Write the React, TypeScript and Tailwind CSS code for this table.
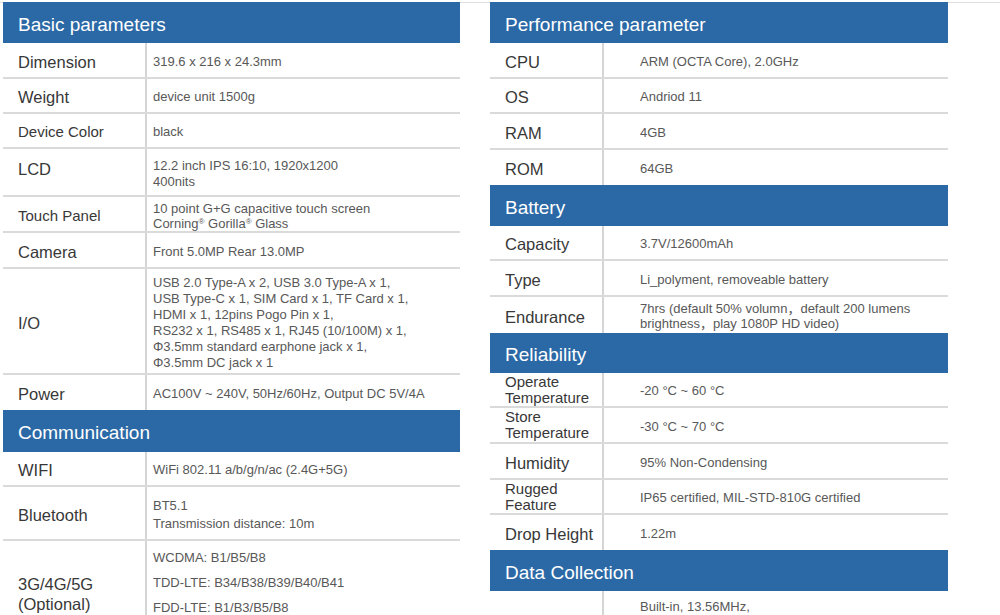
import React from "react";

type Side = "l" | "r";

function Header({ title, h }: { title: string; h: string }) {
  return (
    <div className={`${h} bg-[#2b69a6] text-white text-[19px] flex items-center pl-[15px] pt-[5px]`}>
      {title}
    </div>
  );
}

function Row({
  label,
  children,
  h,
  side,
  lsize = "text-[16.5px] leading-[20px]",
  border = true,
  valueClass = "items-center pt-[3px]",
  labelClass = "pt-[3px]",
}: {
  label: React.ReactNode;
  children?: React.ReactNode;
  h: string;
  side: Side;
  lsize?: string;
  border?: boolean;
  valueClass?: string;
  labelClass?: string;
}) {
  return (
    <div className={`flex ${h} ${border ? "border-b-2 border-[#dadada]" : ""}`}>
      <div
        className={`flex items-center pl-[15px] text-[#383838] shrink-0 ${side === "l" ? "w-[142px]" : "w-[112px]"} ${lsize} ${labelClass}`}
      >
        <div>{label}</div>
      </div>
      <div
        className={`flex-1 flex border-l-2 border-[#d5d5d5] text-[13px] text-[#585858] ${side === "l" ? "pl-[6px]" : "pl-[36px]"} ${valueClass}`}
      >
        <div>{children}</div>
      </div>
    </div>
  );
}

const small = "text-[15px] leading-[16px]";

export default function App() {
  return (
    <div className="w-[1000px] h-[615px] overflow-hidden bg-white font-['Liberation_Sans','Noto_Sans_CJK_SC',sans-serif]">
      <div className="h-[2px]" />
      <div className="h-px bg-[#dedede]" />
      <div className="flex pl-[3px] gap-[30px] -mt-px">
        {/* Left column */}
        <div className="w-[457px] flex flex-col">
          <Header title="Basic parameters" h="h-[41px]" />
          <Row side="l" h="h-[36px]" label="Dimension">319.6 x 216 x 24.3mm</Row>
          <Row side="l" h="h-[35px]" label="Weight">device unit 1500g</Row>
          <Row side="l" h="h-[35px]" label="Device Color" lsize={small}>black</Row>
          <Row side="l" h="h-[48px]" label="LCD" labelClass="pb-[6px]">
            <div className="leading-[16px]">
              <div>12.2 inch IPS 16:10, 1920x1200</div>
              <div>400nits</div>
            </div>
          </Row>
          <Row side="l" h="h-[36px]" label="Touch Panel" lsize={small}>
            <div className="leading-[15px]">
              <div>10 point G+G capacitive touch screen</div>
              <div>
                Corning<sup className="text-[8px]">®</sup> Gorilla<sup className="text-[8px]">®</sup> Glass
              </div>
            </div>
          </Row>
          <Row side="l" h="h-[36px]" label="Camera">Front 5.0MP Rear 13.0MP</Row>
          <Row side="l" h="h-[106px]" label="I/O">
            <div className="leading-[16px]">
              <div>USB 2.0 Type-A x 2, USB 3.0 Type-A x 1,</div>
              <div>USB Type-C x 1, SIM Card x 1, TF Card x 1,</div>
              <div>HDMI x 1, 12pins Pogo Pin x 1,</div>
              <div>RS232 x 1, RS485 x 1, RJ45 (10/100M) x 1,</div>
              <div>Φ3.5mm standard earphone jack x 1,</div>
              <div>Φ3.5mm DC jack x 1</div>
            </div>
          </Row>
          <Row side="l" h="h-[35px]" label="Power" border={false}>
            AC100V ~ 240V, 50Hz/60Hz, Output DC 5V/4A
          </Row>
          <Header title="Communication" h="h-[42px]" />
          <Row side="l" h="h-[35px]" label="WIFI">WiFi 802.11 a/b/g/n/ac (2.4G+5G)</Row>
          <Row side="l" h="h-[54px]" label="Bluetooth">
            <div className="leading-[18px]">
              <div>BT5.1</div>
              <div>Transmission distance: 10m</div>
            </div>
          </Row>
          <Row
            side="l"
            h="h-[104px]"
            label={
              <div>
                <div>3G/4G/5G</div>
                <div>(Optional)</div>
              </div>
            }
            valueClass="items-start pt-[4px]"
          >
            <div className="leading-[25px]">
              <div>WCDMA: B1/B5/B8</div>
              <div>TDD-LTE: B34/B38/B39/B40/B41</div>
              <div>FDD-LTE: B1/B3/B5/B8</div>
            </div>
          </Row>
        </div>

        {/* Right column */}
        <div className="w-[458px] flex flex-col">
          <Header title="Performance parameter" h="h-[41px]" />
          <Row side="r" h="h-[36px]" label="CPU">ARM (OCTA Core), 2.0GHz</Row>
          <Row side="r" h="h-[35px]" label="OS">Andriod 11</Row>
          <Row side="r" h="h-[36px]" label="RAM">4GB</Row>
          <Row side="r" h="h-[35px]" label="ROM" border={false}>64GB</Row>
          <Header title="Battery" h="h-[41px]" />
          <Row side="r" h="h-[35px]" label="Capacity">3.7V/12600mAh</Row>
          <Row side="r" h="h-[36px]" label="Type">Li_polyment, removeable battery</Row>
          <Row side="r" h="h-[36px]" label="Endurance" border={false} valueClass="items-center pt-[1px]">
            <div className="leading-[15px]">
              <div>7hrs (default 50% volumn，default 200 lumens</div>
              <div>brightness，play 1080P HD video)</div>
            </div>
          </Row>
          <Header title="Reliability" h="h-[40px]" />
          <Row
            side="r"
            h="h-[35px]"
            lsize={small}
            labelClass="pt-0"
            label={
              <div>
                <div>Operate</div>
                <div>Temperature</div>
              </div>
            }
          >
            -20 °C ~ 60 °C
          </Row>
          <Row
            side="r"
            h="h-[36px]"
            lsize={small}
            labelClass="pt-0"
            label={
              <div>
                <div>Store</div>
                <div>Temperature</div>
              </div>
            }
          >
            -30 °C ~ 70 °C
          </Row>
          <Row side="r" h="h-[36px]" label="Humidity">95% Non-Condensing</Row>
          <Row
            side="r"
            h="h-[35px]"
            lsize={small}
            labelClass="pt-0"
            label={
              <div>
                <div>Rugged</div>
                <div>Feature</div>
              </div>
            }
          >
            IP65 certified, MIL-STD-810G certified
          </Row>
          <Row side="r" h="h-[35px]" label="Drop Height" border={false}>1.22m</Row>
          <Header title="Data Collection" h="h-[41px]" />
          <Row side="r" h="h-[60px]" label="" valueClass="items-start pt-[8px]">
            <div className="leading-[16px]">
              <div>Built-in, 13.56MHz,</div>
            </div>
          </Row>
        </div>
      </div>
    </div>
  );
}
